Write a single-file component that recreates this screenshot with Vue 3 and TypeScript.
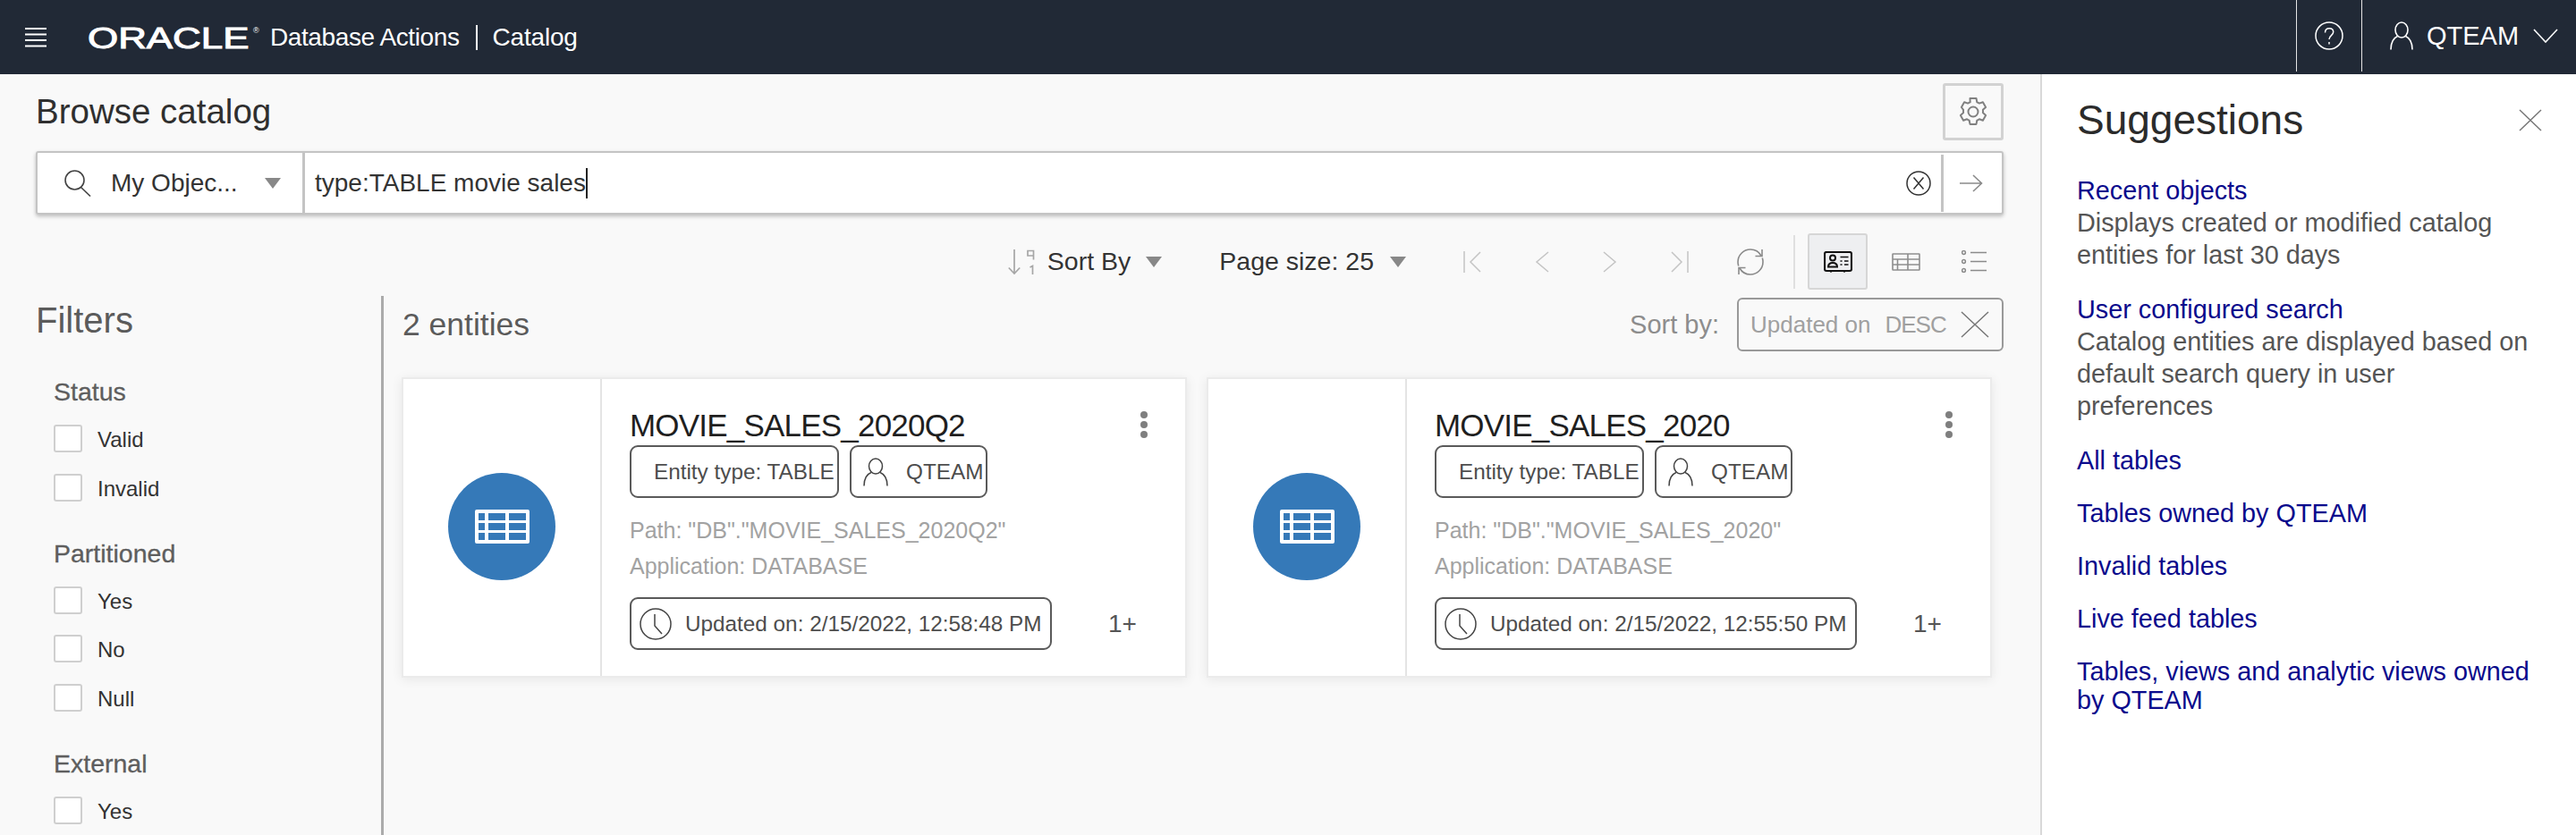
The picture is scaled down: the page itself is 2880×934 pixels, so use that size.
<template>
  <div class="page">
    <header class="topbar">
      <svg class="burger" viewBox="0 0 24 22" width="24" height="22">
        <path d="M0 1h24M0 7.500h24M0 14h24M0 20.500h24" stroke="#fff" stroke-width="2" />
      </svg>
      <div class="logo"><span class="logo-word">ORACLE</span><span class="logo-reg">®</span></div>
      <span class="app-name">Database Actions</span>
      <span class="app-sep"></span>
      <span class="app-page">Catalog</span>
      <div class="top-right">
        <div class="help">
          <svg viewBox="0 0 32 32" width="32" height="32" fill="none" stroke="#fff" stroke-width="1.500">
            <circle cx="16" cy="16" r="15" />
            <path d="M11.500 12.500c0-3 2-4.800 4.700-4.800 2.600 0 4.500 1.700 4.500 4.100 0 3.900-4.700 3.900-4.700 8.200" />
            <path d="M16 23v2.500" />
          </svg>
        </div>
        <div class="user">
          <svg viewBox="0 0 26 32" width="26" height="32" fill="none" stroke="#fff" stroke-width="1.600">
            <ellipse cx="13" cy="9.500" rx="7" ry="8.500" />
            <path d="M8.500 16.500C4 18.500 1 22 1 31.500M17.500 16.500c4.500 2 7.500 5.500 7.500 15" />
          </svg>
          <span>QTEAM</span>
          <svg viewBox="0 0 28 16" width="28" height="16" fill="none" stroke="#fff" stroke-width="1.600">
            <path d="M1 1l13 14L27 1" />
          </svg>
        </div>
      </div>
    </header>

    <div class="layout">
      <main class="main">
        <div class="title-row">
          <h1 class="page-title">Browse catalog</h1>
          <button class="settings">
            <svg viewBox="0 0 32 34" width="32" height="34" fill="none" stroke="#808080" stroke-width="2" stroke-linejoin="round">
              <circle cx="16" cy="17" r="5.500" />
              <path d="M12.500 2h7l.8 4.200c.9.300 1.800.8 2.600 1.400l4-1.400 3.200 5.800-3.200 2.800c.2 1.100.2 2.200 0 3.300l3.200 2.800-3.200 5.800-4-1.400c-.8.600-1.700 1.100-2.600 1.400l-.8 4.200h-7l-.8-4.200c-.9-.3-1.800-.8-2.600-1.400l-4 1.400-3.200-5.800 3.200-2.800c-.2-1.100-.2-2.200 0-3.300L2.900 12l3.200-5.800 4 1.400c.8-.6 1.700-1.100 2.600-1.400z" />
            </svg>
          </button>
        </div>

        <div class="search">
          <div class="scope">
            <svg viewBox="0 0 30 30" width="30" height="30" fill="none" stroke="#444" stroke-width="1.600">
              <ellipse cx="11.500" cy="11.500" rx="10.500" ry="10.500" />
              <path d="M18.500 19.500L29 29.500" />
            </svg>
            <span class="scope-label">My Objec...</span>
            <span class="tri"></span>
          </div>
          <div class="query"><span>type:TABLE movie sales</span><i class="caret"></i></div>
          <svg class="clear" viewBox="0 0 28 28" width="28" height="28" fill="none" stroke="#333" stroke-width="1.500">
            <circle cx="14" cy="14" r="13" />
            <path d="M8.500 7.500l11 13M19.500 7.500l-11 13" />
          </svg>
          <div class="go">
            <svg viewBox="0 0 26 20" width="26" height="20" fill="none" stroke="#8a8a8a" stroke-width="1.600">
              <path d="M0 10h24M15 1l9.500 9-9.500 9" />
            </svg>
          </div>
        </div>

        <div class="toolbar">
          <div class="tool-group sort">
            <svg viewBox="0 0 30 28" width="30" height="28" fill="none" stroke="#a6a6a6" stroke-width="1.700">
              <path d="M7 0v27M.8 20.500L7 27l6.200-6.500" />
              <path d="M22 1.500h6.500v5.500H22zM28.500 7v4.500" />
              <path d="M24.500 20l3-1.500V28" />
            </svg>
            <span>Sort By</span>
            <span class="tri"></span>
          </div>
          <div class="tool-group page-size">
            <span>Page size: 25</span>
            <span class="tri"></span>
          </div>
          <div class="pager">
            <svg viewBox="0 0 20 24" width="20" height="24" fill="none" stroke="#c4c4c4" stroke-width="1.500">
              <path d="M1 0v24M19 1L8 12l11 11" />
            </svg>
            <svg viewBox="0 0 16 24" width="16" height="24" fill="none" stroke="#c4c4c4" stroke-width="1.500">
              <path d="M15 1L2 12l13 11" />
            </svg>
            <svg viewBox="0 0 16 24" width="16" height="24" fill="none" stroke="#c4c4c4" stroke-width="1.500">
              <path d="M1 1l13 11L1 23" />
            </svg>
            <svg viewBox="0 0 20 24" width="20" height="24" fill="none" stroke="#c4c4c4" stroke-width="1.500">
              <path d="M19 0v24M1 1l11 11L1 23" />
            </svg>
          </div>
          <svg class="refresh" viewBox="0 0 32 30" width="32" height="30" fill="none" stroke="#8a8a8a" stroke-width="1.600">
            <path d="M28 8C25.500 3.500 21 1 16 1 8 1 2 7.500 2 15c0 1.500.2 3 .7 4.500M4 22c2.500 4.500 7 7 12 7 8 0 14-6.500 14-14 0-1.500-.2-3-.7-4.500" />
            <path d="M29 1v7.500h-7.500M3 29v-7.500h7.500" />
          </svg>
          <span class="tool-sep"></span>
          <div class="view-btn active">
            <svg viewBox="0 0 32 24" width="32" height="24" fill="none" stroke="#111" stroke-width="2">
              <rect x="1" y="1" width="30" height="21" rx="2" stroke-width="2.200" />
              <circle cx="10" cy="7.500" r="3" />
              <path d="M5 17.500c0-3.500 2-4.500 5-4.500s5 1 5 4.500z" />
              <path d="M18.500 6.500h9M18.500 11h2M23 11h4.500M18.500 15h2M23 15h4.500" stroke-width="1.500" />
              <path d="M8 22v1.800M23 22v1.800" stroke-width="1.500" />
            </svg>
          </div>
          <div class="view-btn">
            <svg viewBox="0 0 32 20" width="32" height="20" fill="none" stroke="#8e8e8e" stroke-width="1.600">
              <rect x="1" y="1" width="30" height="18" rx=".5" />
              <path d="M1 7h30M1 13h30M6.500 7v12M18 1v18" />
            </svg>
          </div>
          <div class="view-btn">
            <svg viewBox="0 0 28 25" width="28" height="25" fill="none" stroke="#8a8a8a" stroke-width="1.500">
              <circle cx="2.500" cy="2.500" r="1.900" />
              <circle cx="2.500" cy="12.500" r="1.900" />
              <circle cx="2.500" cy="22.500" r="1.900" />
              <path d="M10 2.500h18M10 12.500h18M10 22.500h18" />
            </svg>
          </div>
        </div>

        <div class="content">
          <aside class="filters">
            <h2 class="filters-title">Filters</h2>
            <section v-for="group in filterGroups" :key="group.name" class="filter-group">
              <h3>{{ group.name }}</h3>
              <label v-for="option in group.options" :key="option" class="filter-option">
                <span class="checkbox"></span>
                <span class="option-text">{{ option }}</span>
              </label>
            </section>
          </aside>

          <section class="results">
            <div class="results-head">
              <span class="count">2 entities</span>
              <span class="sort-label">Sort by:</span>
              <div class="sort-chip">
                <span>Updated on</span>
                <span class="desc">DESC</span>
                <svg viewBox="0 0 32 30" width="32" height="30" fill="none" stroke="#777" stroke-width="1.500">
                  <path d="M1 1l30 28M31 1L1 29" />
                </svg>
              </div>
            </div>

            <div class="cards">
              <article v-for="card in cards" :key="card.name" class="card">
                <div class="card-icon">
                  <div class="circle">
                    <svg viewBox="0 0 61 38" width="61" height="38">
                      <path
                        fill="#fff"
                        fill-rule="evenodd"
                        d="M2 0h57a2 2 0 0 1 2 2v34a2 2 0 0 1-2 2H2a2 2 0 0 1-2-2V2a2 2 0 0 1 2-2zM4 4v8h7V4zM15 4v8h19V4zM38 4v8h19V4zM4 15v8h7v-8zM15 15v8h19v-8zM38 15v8h19v-8zM4 26v8h7v-8zM15 26v8h19v-8zM38 26v8h19v-8z"
                      />
                    </svg>
                  </div>
                </div>
                <div class="card-body">
                  <div class="card-head">
                    <h4>{{ card.name }}</h4>
                    <div class="kebab"><i></i><i></i><i></i></div>
                  </div>
                  <div class="tags">
                    <span class="tag type-tag">Entity type: TABLE</span>
                    <span class="tag owner-tag">
                      <svg viewBox="0 0 28 32" width="28" height="32" fill="none" stroke="#444" stroke-width="1.500">
                        <ellipse cx="14" cy="9.500" rx="7.500" ry="8.500" />
                        <path d="M9 16.500C4 18.500 1 22 1 31.500M19 16.500c5 2 8 5.500 8 15" />
                      </svg>
                      <span>QTEAM</span>
                    </span>
                  </div>
                  <p class="meta">Path: "DB"."{{ card.name }}"</p>
                  <p class="meta">Application: DATABASE</p>
                  <div class="card-foot">
                    <span class="tag updated-tag">
                      <svg viewBox="0 0 36 36" width="36" height="36" fill="none" stroke="#444" stroke-width="1.500">
                        <circle cx="18" cy="18" r="17" />
                        <path d="M17 7v13l8 9" />
                      </svg>
                      <span>Updated on: {{ card.updated }}</span>
                    </span>
                    <span class="more">1+</span>
                  </div>
                </div>
              </article>
            </div>
          </section>
        </div>
      </main>

      <aside class="suggestions">
        <div class="sugg-head">
          <h2>Suggestions</h2>
          <svg viewBox="0 0 26 25" width="26" height="25" fill="none" stroke="#777" stroke-width="1.500">
            <path d="M1 1l24 23M25 1L1 24" />
          </svg>
        </div>
        <div v-for="item in suggestions" :key="item.title" class="sugg-item">
          <a>{{ item.title }}</a>
          <p v-if="item.text">{{ item.text }}</p>
        </div>
      </aside>
    </div>
  </div>
</template>

<script setup lang="ts">
interface FilterGroup {
  name: string
  options: string[]
}

const filterGroups: FilterGroup[] = [
  { name: 'Status', options: ['Valid', 'Invalid'] },
  { name: 'Partitioned', options: ['Yes', 'No', 'Null'] },
  { name: 'External', options: ['Yes'] }
]

const cards = [
  { name: 'MOVIE_SALES_2020Q2', updated: '2/15/2022, 12:58:48 PM' },
  { name: 'MOVIE_SALES_2020', updated: '2/15/2022, 12:55:50 PM' }
]

const suggestions = [
  { title: 'Recent objects', text: 'Displays created or modified catalog entities for last 30 days' },
  { title: 'User configured search', text: 'Catalog entities are displayed based on default search query in user preferences' },
  { title: 'All tables' },
  { title: 'Tables owned by QTEAM' },
  { title: 'Invalid tables' },
  { title: 'Live feed tables' },
  { title: 'Tables, views and analytic views owned by QTEAM' }
]
</script>

<style>
html,
body {
  margin: 0;
  background: #f9f9f9;
}
</style>

<style scoped>
.page {
  height: 934px;
  display: flex;
  flex-direction: column;
  overflow: hidden;
  font-family: "Liberation Sans", Arial, sans-serif;
  font-size: 28px;
  color: #2b2b2b;
  background: #f9f9f9;
}

.topbar {
  flex: 0 0 83px;
  display: flex;
  align-items: center;
  background: #212936;
  color: #fff;
  padding-left: 28px;
  box-sizing: border-box;
}

.burger {
  margin-right: 46px;
}

.logo {
  width: 204px;
  display: flex;
  align-items: flex-start;
  position: relative;
  height: 30px;
}

.logo-word {
  display: inline-block;
  font-size: 33px;
  line-height: 31px;
  transform: scaleX(1.33);
  transform-origin: left center;
  -webkit-text-stroke: 1px #fff;
}

.logo-reg {
  position: absolute;
  left: 185px;
  top: 2px;
  font-size: 9px;
  line-height: 10px;
}

.app-name {
  font-size: 28px;
  letter-spacing: -0.4px;
}

.app-sep {
  width: 2px;
  height: 28px;
  background: #fff;
  margin: 0 17px 0 18px;
}

.app-page {
  font-size: 28px;
  letter-spacing: -0.2px;
}

.top-right {
  margin-left: auto;
  display: flex;
  height: 80px;
  align-self: flex-start;
}

.help {
  width: 72px;
  border-left: 1px solid #e5e5e5;
  display: flex;
  align-items: center;
  justify-content: center;
}

.user {
  width: 240px;
  box-sizing: border-box;
  border-left: 1px solid #e5e5e5;
  display: flex;
  align-items: center;
  padding-left: 31px;
  font-size: 29px;
}

.user span {
  margin: 0 16px 0 15px;
}

.layout {
  flex: 1;
  display: flex;
  min-height: 0;
}

.main {
  flex: 0 0 2281px;
  box-sizing: border-box;
  padding: 0 41px 0 40px;
  display: flex;
  flex-direction: column;
}

.title-row {
  display: flex;
  justify-content: space-between;
  align-items: center;
  margin-top: 10px;
  height: 64px;
}

.page-title {
  margin: 0;
  font-size: 38.500px;
  font-weight: 400;
  color: #2f2f2f;
}

.settings {
  width: 68px;
  height: 64px;
  padding: 0;
  border: 3px solid #d2d2d2;
  border-radius: 3px;
  background: #f9f9f9;
  display: flex;
  align-items: center;
  justify-content: center;
}

.search {
  margin-top: 12px;
  height: 71px;
  box-sizing: border-box;
  display: flex;
  align-items: center;
  background: #fff;
  border: 2px solid #c4c4c4;
  border-radius: 3px;
  box-shadow: 0 2px 4px rgba(0, 0, 0, 0.25);
}

.scope {
  width: 299px;
  height: 100%;
  box-sizing: border-box;
  border-right: 3px solid #c4c4c4;
  display: flex;
  align-items: center;
  padding-left: 30px;
}

.scope-label {
  margin: 0 28px 0 22px;
  width: 144px;
  white-space: nowrap;
  color: #333;
}

.tri {
  display: inline-block;
  width: 0;
  height: 0;
  border-left: 9px solid transparent;
  border-right: 9px solid transparent;
  border-top: 12px solid #888;
}

.query {
  flex: 1;
  display: flex;
  align-items: center;
  padding-left: 11px;
  color: #333;
}

.caret {
  display: inline-block;
  width: 2px;
  height: 34px;
  background: #222;
}

.clear {
  margin-right: 11px;
}

.go {
  width: 68px;
  height: 64px;
  box-sizing: border-box;
  border-left: 3px solid #c4c4c4;
  display: flex;
  align-items: center;
  justify-content: center;
  padding-right: 4px;
}

.toolbar {
  margin-top: 21px;
  height: 63px;
  display: flex;
  align-items: center;
  justify-content: flex-end;
}

.tool-group {
  display: flex;
  align-items: center;
  color: #333;
  font-size: 28.500px;
}

.sort {
  margin-right: 64px;
}

.sort span:first-of-type {
  margin: 0 17px 0 14px;
}

.page-size span:first-of-type {
  margin-right: 18px;
}

.page-size {
  margin-right: 64px;
}

.pager {
  display: flex;
  align-items: center;
  gap: 60px;
  margin-right: 53px;
}

.refresh {
  margin-right: 32px;
}

.tool-sep {
  width: 2px;
  height: 60px;
  background: #e0e0e0;
  margin-right: 14px;
}

.view-btn {
  width: 67px;
  height: 63px;
  box-sizing: border-box;
  display: flex;
  align-items: center;
  justify-content: center;
  border: 2px solid transparent;
  border-radius: 3px;
}

.view-btn.active {
  background: #eeeff1;
  border-color: #d6d6d6;
  margin-right: 9px;
}

.view-btn:last-child {
  margin-left: 9px;
}

.content {
  flex: 1;
  min-height: 0;
  display: flex;
  margin-top: 7px;
}

.filters {
  flex: 0 0 389px;
  box-sizing: border-box;
  border-right: 3px solid #ababab;
}

.filters-title {
  margin: 3px 0 38px;
  font-size: 40px;
  line-height: 48px;
  font-weight: 400;
  color: #5b5b5b;
}

.filter-group {
  padding-left: 20px;
  margin-bottom: 40px;
}

.filter-group h3 {
  margin: 0 0 19px;
  font-size: 28.500px;
  line-height: 36px;
  font-weight: 400;
  color: #5e5e5e;
  -webkit-text-stroke: 0.3px #5e5e5e;
}

.filter-option {
  display: flex;
  align-items: center;
  height: 31px;
  margin-bottom: 23.500px;
  font-size: 24px;
  color: #333;
}

.filter-option:last-child {
  margin-bottom: 0;
}

.option-text {
  padding-top: 3px;
}

.checkbox {
  width: 32px;
  height: 31px;
  box-sizing: border-box;
  border: 2px solid #cfcfcf;
  border-radius: 3px;
  background: #fff;
  margin-right: 17px;
}

.results {
  flex: 1;
  padding-left: 20px;
  min-width: 0;
}

.results-head {
  display: flex;
  align-items: center;
  margin-top: 2px;
  height: 60px;
}

.count {
  font-size: 35.500px;
  color: #5b5b5b;
  margin-left: 1px;
  margin-right: auto;
}

.sort-label {
  font-size: 29px;
  color: #8d8d8d;
  margin-right: 20px;
}

.sort-chip {
  width: 298px;
  height: 60px;
  box-sizing: border-box;
  border: 2px solid #999;
  border-radius: 6px;
  display: flex;
  align-items: center;
  padding-left: 13px;
  font-size: 26px;
  color: #a0a0a0;
}

.sort-chip .desc {
  margin: 0 16px;
  letter-spacing: -1px;
}

.cards {
  display: flex;
  gap: 22px;
  margin-top: 29px;
}

.card {
  flex: 0 0 878px;
  height: 336px;
  box-sizing: border-box;
  display: flex;
  background: #fff;
  border: 2px solid #ebebeb;
  box-shadow: 0 2px 12px rgba(0, 0, 0, 0.08);
}

.card-icon {
  flex: 0 0 220px;
  border-right: 2px solid #e4e4e4;
  display: flex;
  align-items: center;
  justify-content: center;
  padding-bottom: 2px;
}

.circle {
  width: 120px;
  height: 120px;
  border-radius: 50%;
  background: #3579b8;
  display: flex;
  align-items: center;
  justify-content: center;
}

.card-body {
  flex: 1;
  min-width: 0;
  padding: 30px 30px 0 31px;
}

.card-head {
  display: flex;
  align-items: center;
  justify-content: space-between;
  height: 44px;
  padding-right: 12px;
}

.card-head h4 {
  margin: 0;
  font-size: 35px;
  font-weight: 400;
  color: #1f1f1f;
  letter-spacing: -0.8px;
}

.kebab {
  display: flex;
  flex-direction: column;
  gap: 3px;
  margin-top: -3px;
}

.kebab i {
  width: 8px;
  height: 8px;
  border-radius: 50%;
  background: #7f7f7f;
}

.tags {
  display: flex;
  gap: 12px;
}

.tag {
  height: 59px;
  box-sizing: border-box;
  border: 2px solid #5a5a5a;
  border-radius: 9px;
  display: inline-flex;
  align-items: center;
  font-size: 24.300px;
  color: #4d4d4d;
  white-space: nowrap;
}

.type-tag {
  width: 234px;
  padding-left: 25px;
}

.owner-tag {
  width: 154px;
  padding-left: 13px;
  gap: 20px;
}

.meta {
  margin: 0;
  font-size: 25px;
  line-height: 40px;
  color: #a2a2a2;
}

.tags + .meta {
  margin-top: 16px;
}

.card-foot {
  display: flex;
  align-items: center;
  margin-top: 15px;
}

.updated-tag {
  width: 472px;
  padding-left: 9px;
  gap: 15px;
}

.more {
  margin-left: 63px;
  font-size: 28px;
  color: #555;
}

.suggestions {
  flex: 1;
  box-sizing: border-box;
  background: #fff;
  border-left: 2px solid #d9d9d9;
  padding: 0 38px 0 39px;
}

.sugg-head {
  display: flex;
  justify-content: space-between;
  align-items: center;
  margin-top: 25px;
  height: 52px;
  margin-bottom: 37px;
}

.sugg-head h2 {
  margin: 0;
  font-size: 46px;
  font-weight: 400;
  color: #2b2b2b;
}

.sugg-item {
  margin-bottom: 27px;
  font-size: 28.800px;
}

.sugg-item a {
  display: block;
  color: #0a0a8c;
  line-height: 32px;
}

.sugg-item p {
  margin: 2px 0 0;
  max-width: 512px;
  color: #555;
  line-height: 36px;
}
</style>
